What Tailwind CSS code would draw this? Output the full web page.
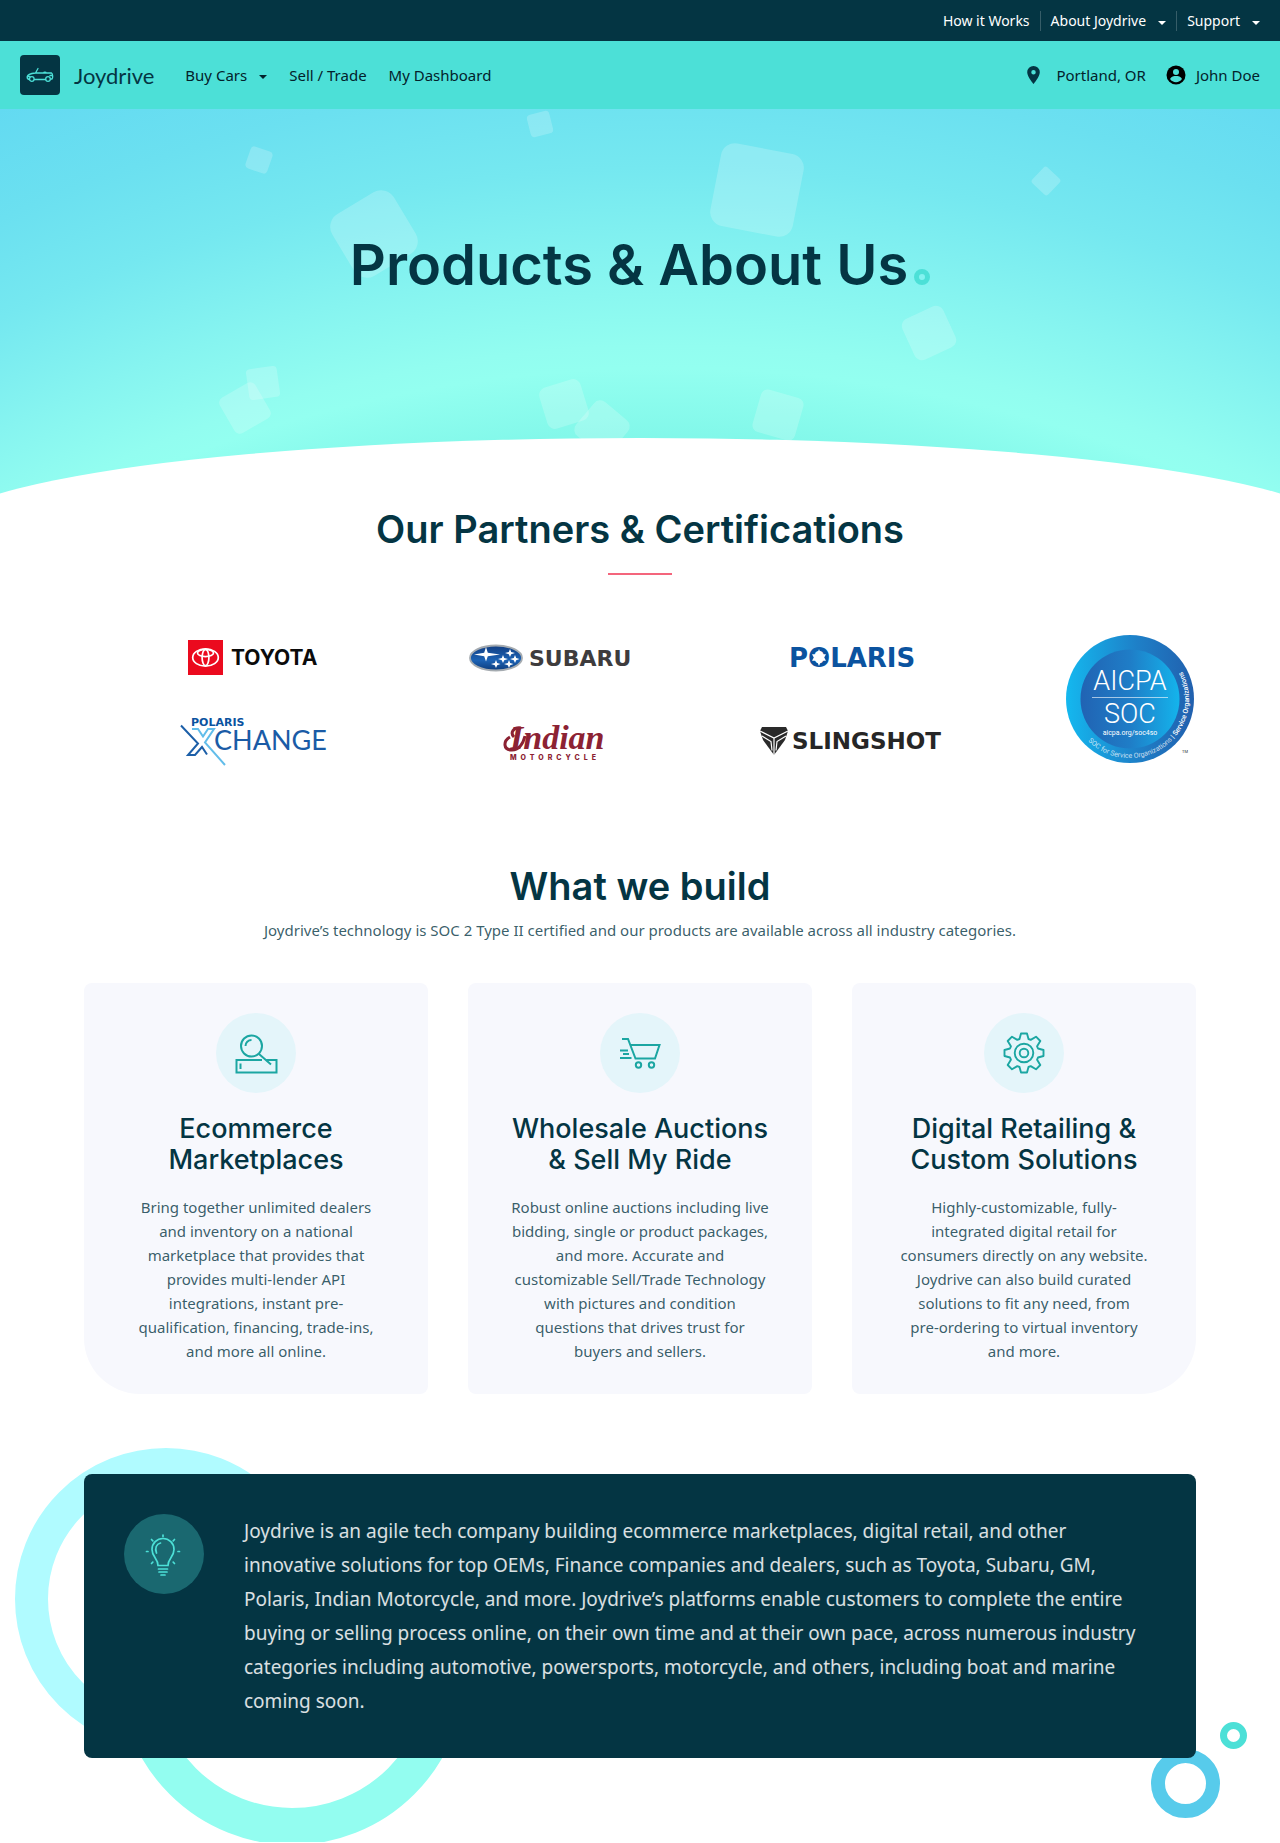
<!DOCTYPE html>
<html lang="en">
<head>
<meta charset="utf-8">
<meta name="viewport" content="width=device-width, initial-scale=1">
<title>Joydrive – Products &amp; About Us</title>
<script src="https://cdn.jsdelivr.net/npm/@tailwindcss/browser@4"></script>
</head>
<body class="bg-white font-['Noto_Sans',sans-serif] text-[#043543]">
<div class="overflow-hidden">

  <header>
    <nav aria-label="Secondary" class="flex h-[41px] items-center justify-end bg-[#043543] px-5 text-sm text-white">
      <a href="#" class="pr-[10px]">How it Works</a>
      <button type="button" class="flex items-center gap-3 border-l border-white/20 px-[10px]">About Joydrive
        <svg class="mt-1 h-1 w-2" viewBox="0 0 8 4" fill="currentColor"><path d="M0 0h8L4 4z"/></svg>
      </button>
      <button type="button" class="flex items-center gap-3 border-l border-white/20 pl-[10px]">Support
        <svg class="mt-1 h-1 w-2" viewBox="0 0 8 4" fill="currentColor"><path d="M0 0h8L4 4z"/></svg>
      </button>
    </nav>
    <nav aria-label="Main" class="flex h-[68px] items-center bg-[#4ce0d7] px-5 text-[15px] text-[#03222b]">
      <a href="#" class="mr-[31px] flex items-center gap-[14px] font-[Lato,sans-serif] text-[22px] text-[#043543]">
        <span class="flex size-10 items-center justify-center rounded bg-[#043543]">
          <svg class="h-4 w-7" viewBox="0 0 28 16" fill="none" stroke="#4ce0d7" stroke-width="1.3" stroke-linecap="round" stroke-linejoin="round">
            <circle cx="5.800" cy="12" r="2.300"/><circle cx="22" cy="12" r="2.300"/>
            <path d="M8.500 12.500h11M3.200 12.500C1 12 1 11 1.200 9.500 1.500 7 5 6.500 9.500 6l2.500-4.500M9.500 6h16c1.500 1 1.500 5 .500 6h-1.300M17.500 6c.300-1.300 2.500-1.300 2.800 0M1.500 9.500h2.500M24 8.500h2.500"/>
          </svg>
        </span>
        Joydrive
      </a>
      <div class="flex items-center gap-[22px]">
        <button type="button" class="flex items-center gap-3">Buy Cars
          <svg class="mt-1 h-1 w-2" viewBox="0 0 8 4" fill="currentColor"><path d="M0 0h8L4 4z"/></svg>
        </button>
        <a href="#">Sell / Trade</a>
        <a href="#">My Dashboard</a>
      </div>
      <div class="ml-auto flex items-center gap-5">
        <a href="#" class="flex items-center gap-4">
          <svg class="h-[18px] w-[13px]" viewBox="0 0 14 20" fill="#043543"><path fill-rule="evenodd" d="M7 0a7 7 0 0 0-7 7c0 5 7 13 7 13s7-8 7-13a7 7 0 0 0-7-7Zm0 4.500a2.500 2.500 0 1 1 0 5 2.500 2.500 0 0 1 0-5Z"/></svg>
          Portland, OR
        </a>
        <a href="#" class="flex items-center gap-[10px]">
          <svg class="size-5" viewBox="0 0 20 20"><circle cx="10" cy="10" r="9.500" fill="#000"/><circle cx="10" cy="7" r="3" fill="#4ce0d7"/><path d="M4 14c1-2.500 4-3 6-3s5 .500 6 3a7.200 7.200 0 0 1-12 0Z" fill="#4ce0d7"/></svg>
          John Doe
        </a>
      </div>
    </nav>
  </header>

  <section class="relative flex h-[386px] justify-center overflow-hidden bg-[radial-gradient(circle_1800px_at_52%_1609px,#7ef6e8_1265px,#93fff0_1350px,#92fdf0_1372px,#86f4f0_1450px,#75e8f0_1550px,#6be0f0_1640px,#5fd7f2_1790px)]">
    <svg class="absolute top-0 left-1/2 h-[386px] w-[1280px] -translate-x-1/2" viewBox="2 0 1280 386" fill="#fff" fill-opacity=".2" aria-hidden="true">
      <rect x="-11.500" y="-11.500" width="23" height="23" rx="4" transform="translate(261 51) rotate(19)"/>
      <rect x="-11.500" y="-11.500" width="23" height="23" rx="4" transform="translate(542 15) rotate(-14)"/>
      <rect x="-36" y="-36" width="72" height="72" rx="15" transform="translate(376 125) rotate(-31)"/>
      <rect x="-42" y="-42" width="84" height="84" rx="14" transform="translate(759 81) rotate(11)"/>
      <rect x="-11" y="-11" width="22" height="22" rx="3" transform="translate(1048 72) rotate(43)"/>
      <rect x="-22.500" y="-22.500" width="45" height="45" rx="8" transform="translate(931 224) rotate(-25)"/>
      <rect x="-22" y="-22" width="44" height="44" rx="7" transform="translate(780 306) rotate(16)"/>
      <rect x="-21.500" y="-21.500" width="43" height="43" rx="8" transform="translate(566 295) rotate(-17)"/>
      <rect x="-22" y="-22" width="44" height="44" rx="8" transform="translate(604 319) rotate(40)"/>
      <rect x="-15.500" y="-15.500" width="31" height="31" rx="4" transform="translate(265 274) rotate(-8)"/>
      <rect x="-20.500" y="-20.500" width="41" height="41" rx="6" transform="translate(247 299) rotate(-30)"/>
    </svg>
    <div class="absolute top-[329px] left-[-5%] h-[190px] w-[110%] rounded-[50%] bg-white"></div>
    <h1 class="relative mt-[124px] flex h-16 items-center gap-[6px] font-[Inter,sans-serif] text-[56px] leading-[64px] font-semibold">Products &amp; About Us
      <span class="mt-6 size-4 rounded-full border-[5px] border-[#4ce0d7]"></span>
    </h1>
  </section>

  <main class="mx-auto max-w-[1152px] px-5">
    <section class="pt-3">
      <h2 class="text-center font-[Inter,sans-serif] text-[38px] leading-[44px] font-semibold">Our Partners &amp; Certifications</h2>
      <div class="mx-auto mt-[22px] h-[2px] w-16 bg-[#f4657c]"></div>
      <div class="mt-[41px] flex items-center pl-5">
        <ul class="grid flex-1 auto-rows-[83px] grid-cols-3 place-items-center">
          <li>
            <svg width="132" height="36" viewBox="0 0 132 36" role="img" aria-label="Toyota">
              <rect width="35" height="35" fill="#eb0a1e"/>
              <g fill="none" stroke="#fff" stroke-width="1.700"><ellipse cx="17.500" cy="17.500" rx="12.800" ry="8.700"/><ellipse cx="17.500" cy="13" rx="8" ry="3.600"/><ellipse cx="17.500" cy="17.500" rx="3.400" ry="8.200"/></g>
              <text x="43" y="25" font-family="Inter, sans-serif" font-weight="700" font-size="21" fill="#0b0b0b">TOYOTA</text>
            </svg>
          </li>
          <li>
            <svg width="170" height="30" viewBox="0 0 170 30" role="img" aria-label="Subaru">
              <defs><linearGradient id="sub" x1="0" y1="0" x2="0" y2="1"><stop offset="0" stop-color="#123f83"/><stop offset=".6" stop-color="#1c62b4"/><stop offset="1" stop-color="#0d3c7c"/></linearGradient></defs>
              <ellipse cx="27" cy="15" rx="26" ry="12.500" fill="url(#sub)" stroke="#a5abb0" stroke-width="1.800"/>
              <g fill="#fff"><path d="M17 4l1.800 5.800L31 11.500l-12.200 1.700L17 18.500l-1.800-5.300L5 11.500l10.200-1.700z"/>
              <path d="M41 6l1.200 3 3.800 1-3.800 1.200L41 14l-1.200-2.800L36 10l3.800-1zM34 12l1.200 3 3.800 1-3.800 1.200L34 20l-1.200-2.800L29 16l3.800-1zM46 12l1.200 3 3.300 1-3.300 1.200L46 20l-1.200-2.800L41 16l3.800-1zM27 17l1.200 3 3.300 1-3.300 1.200L27 25l-1.200-2.800L22 21l3.800-1zM40 17l1.200 3 3.300 1-3.300 1.200L40 25l-1.200-2.800L35 21l3.800-1z"/></g>
              <text x="60" y="23" font-family="DejaVu Sans, sans-serif" font-weight="700" font-size="22" fill="#3e3c3d">SUBARU</text>
            </svg>
          </li>
          <li>
            <svg width="136" height="34" viewBox="0 -2 136 34" role="img" aria-label="Polaris">
              <text x="3" y="24" font-family="DejaVu Sans, sans-serif" font-weight="700" font-size="26" fill="#0b539f">POLARIS</text>
              <path d="M33 6l2.200 5.300h4.800l-1.800 3.200 1.800 3.200h-4.800L33 23l-2.200-5.300H26l1.800-3.200-1.800-3.200h4.800z" fill="#fff"/>
            </svg>
          </li>
          <li>
            <svg width="148" height="56" viewBox="0 -5 148 56" role="img" aria-label="Polaris Xchange">
              <text x="11" y="8" font-family="DejaVu Sans, sans-serif" font-weight="700" font-size="11" fill="#0b539f">POLARIS</text>
              <g fill="none" stroke-width="2"><path d="M1 7.500l17 18-10 11.500h7l7-8 5 7.500" stroke="#1c5fa8"/><path d="M12 11h6l5 7.500 5-7.500h6l-9 13.500 20 22.500" stroke="#62bdea"/></g>
              <text x="34" y="32" font-family="Lato, sans-serif" font-size="27" fill="#1a5ba6">CHANGE</text>
            </svg>
          </li>
          <li>
            <svg width="122" height="50" viewBox="-10 -8 122 50" role="img" aria-label="Indian Motorcycle" fill="#8c2233">
              <text x="7" y="25" font-family="Liberation Serif, serif" font-weight="700" font-style="italic" font-size="34">Indian</text>
              <path d="M18 4C10 3 7 9 11 13M7 13c-7 4-7 13 2 13 7 0 11-6 13-14" fill="none" stroke="#8c2233" stroke-width="3"/>
              <text x="7" y="36" font-family="Inter, sans-serif" font-weight="800" font-size="7" class="tracking-[4px]">MOTORCYCLE</text>
            </svg>
          </li>
          <li>
            <svg width="190" height="30" viewBox="0 0 190 30" role="img" aria-label="Slingshot">
              <path d="M3 1h24l2 4-3 9-11 15L4 14 1 5z" fill="#2a2a2a"/>
              <path d="M1 5l14 7 14-7M15 12v17M3 10l9 5.500 1 9M27 10l-9 5.500-1 9" fill="none" stroke="#fff" stroke-width="1.200"/>
              <text x="33" y="23" font-family="DejaVu Sans, sans-serif" font-weight="700" font-size="23" fill="#262626">SLINGSHOT</text>
            </svg>
          </li>
        </ul>
        <svg class="ml-[62px] size-[130px]" viewBox="0 0 130 130" role="img" aria-label="AICPA SOC for Service Organizations" fill="#fff">
          <defs>
            <linearGradient id="ring"><stop offset="0" stop-color="#14b8ef"/><stop offset=".55" stop-color="#1e80c8"/><stop offset="1" stop-color="#2160ae"/></linearGradient>
            <linearGradient id="disc"><stop offset="0" stop-color="#2163b3"/><stop offset=".5" stop-color="#1f7dc7"/><stop offset="1" stop-color="#14b4ec"/></linearGradient>
            <path id="arc" d="M22 107A59 59 0 0 0 64 124A59 59 0 0 0 123 65A59 59 0 0 0 64 6"/>
          </defs>
          <circle cx="64" cy="65" r="64" fill="url(#ring)"/>
          <circle cx="64" cy="65" r="49.500" fill="url(#disc)"/>
          <text x="64" y="56" text-anchor="middle" font-family="Roboto, sans-serif" font-weight="300" font-size="27">AICPA</text>
          <path d="M26 63h76v1H26z" fill-opacity=".6"/>
          <text x="64" y="89" text-anchor="middle" font-family="Roboto, sans-serif" font-weight="300" font-size="27">SOC</text>
          <text x="64" y="101" text-anchor="middle" font-family="Roboto, sans-serif" font-size="7">aicpa.org/soc4so</text>
          <text font-family="Roboto, sans-serif" font-size="7"><textPath href="#arc"><tspan fill-opacity=".75">SOC for Service Organizations</tspan> | <tspan font-weight="500">Service Organizations</tspan></textPath></text>
          <text x="116" y="119" font-family="Roboto, sans-serif" font-size="4" fill="#333">TM</text>
        </svg>
      </div>
    </section>

    <section class="pt-[82px] text-center">
      <h2 class="font-[Inter,sans-serif] text-[38px] leading-[44px] font-semibold">What we build</h2>
      <p class="mt-[10px] text-[15px] leading-6 text-[#043543]/80">Joydrive’s technology is SOC 2 Type II certified and our products are available across all industry categories.</p>
      <div class="mt-[41px] grid grid-cols-3 gap-10">
        <article class="flex flex-col items-center rounded-lg rounded-bl-[56px] bg-[#f7f8fd] px-8 pt-[30px] pb-[31px]">
          <svg class="size-20 rounded-full bg-[#e4f5fa]" viewBox="0 0 80 80" fill="none" stroke="#1ba6a2" stroke-width="2" aria-hidden="true">
            <circle cx="35.500" cy="33" r="10.500"/><path d="M29.500 33a6 6 0 0 1 6-6M43 41l12 10.500M24.500 50.500v5.500"/><path d="M46 47H20.500v12.500h40V47H50"/>
          </svg>
          <h3 class="mt-5 font-[Inter,sans-serif] text-[27px] leading-[31px] font-medium">Ecommerce<br>Marketplaces</h3>
          <p class="mt-5 text-[15px] leading-6 text-[#043543]/80">Bring together unlimited dealers<br>and inventory on a national<br>marketplace that provides that<br>provides multi-lender API<br>integrations, instant pre-<br>qualification, financing, trade-ins,<br>and more all online.</p>
        </article>
        <article class="flex flex-col items-center rounded-lg bg-[#f7f8fd] px-8 pt-[30px] pb-[31px]">
          <svg class="size-20 rounded-full bg-[#e4f5fa]" viewBox="0 0 80 80" fill="none" stroke="#1ba6a2" stroke-width="2" aria-hidden="true">
            <path d="M22 26h6l7.500 19.500H55L59.500 32h-29M20 37.500h8M23 41h6M20 45h11.500"/><circle cx="38.500" cy="52" r="2.700"/><circle cx="51.500" cy="52" r="2.700"/>
          </svg>
          <h3 class="mt-5 font-[Inter,sans-serif] text-[27px] leading-[31px] font-medium">Wholesale Auctions<br>&amp; Sell My Ride</h3>
          <p class="mt-5 text-[15px] leading-6 text-[#043543]/80">Robust online auctions including live<br>bidding, single or product packages,<br>and more. Accurate and<br>customizable Sell/Trade Technology<br>with pictures and condition<br>questions that drives trust for<br>buyers and sellers.</p>
        </article>
        <article class="flex flex-col items-center rounded-lg rounded-br-[56px] bg-[#f7f8fd] px-8 pt-[30px] pb-[31px]">
          <svg class="size-20 rounded-full bg-[#e4f5fa]" viewBox="0 0 80 80" fill="none" stroke="#1ba6a2" stroke-width="1.900" stroke-linejoin="round" aria-hidden="true">
            <g transform="translate(40 40)"><path d="M-4.500-14-3-19.500H3L4.500-14 6.700-13.100 12-16.300 16.300-12 13.100-6.700 14-4.500 19.500-3V3L14 4.500 13.100 6.700 16.300 12 12 16.300 6.700 13.100 4.500 14 3 19.500H-3L-4.500 14-6.700 13.100-12 16.300-16.300 12-13.100 6.700-14 4.500-19.500 3V-3L-14-4.500-13.100-6.700-16.300-12-12-16.300-6.700-13.100Z"/><circle r="9.300"/><circle r="4.300"/></g>
          </svg>
          <h3 class="mt-5 font-[Inter,sans-serif] text-[27px] leading-[31px] font-medium">Digital Retailing &amp;<br>Custom Solutions</h3>
          <p class="mt-5 text-[15px] leading-6 text-[#043543]/80">Highly-customizable, fully-<br>integrated digital retail for<br>consumers directly on any website.<br>Joydrive can also build curated<br>solutions to fit any need, from<br>pre-ordering to virtual inventory<br>and more.</p>
        </article>
      </div>
    </section>

    <section class="relative mt-20 mb-[84px]">
      <div class="absolute top-[-26px] left-[-69px] size-[302px] rounded-full border-[33px] border-[#b0fbff]"></div>
      <div class="absolute top-[25px] left-[35px] size-[346px] rounded-full border-[37px] border-[#93fdf0]"></div>
      <div class="absolute right-[-24px] bottom-[-60px] size-[69px] rounded-full border-[14px] border-[#57cbeb]"></div>
      <div class="absolute right-[-51px] bottom-[9px] size-[27px] rounded-full border-[7px] border-[#4ce0d7]"></div>
      <div class="relative flex gap-10 rounded-lg bg-[#043543] p-10">
        <svg class="size-20 shrink-0 rounded-full bg-[#1a6870]" viewBox="0 0 80 80" fill="none" stroke="#4ce0d7" stroke-width="1.700" stroke-linecap="round" aria-hidden="true">
          <path d="M34 51.500c0-7-6-8.500-6-16a11 11 0 0 1 22 0c0 7.500-6 9-6 16ZM34.500 55h9M35 58h8M37 61h4M32.500 39c-2-5 0-9 4-10M39 21v1.500M27.500 25.500l1.300 1.300M50.500 25.500l-1.300 1.300M22.500 37.500H24M54 37.500h1.500M27.500 49.500l1.300-1.300M50.500 49.500l-1.300-1.300"/>
        </svg>
        <p class="text-[19px] leading-[34px] text-white/85">Joydrive is an agile tech company building ecommerce marketplaces, digital retail, and other<br>innovative solutions for top OEMs, Finance companies and dealers, such as Toyota, Subaru, GM,<br>Polaris, Indian Motorcycle, and more. Joydrive’s platforms enable customers to complete the entire<br>buying or selling process online, on their own time and at their own pace, across numerous industry<br>categories including automotive, powersports, motorcycle, and others, including boat and marine<br>coming soon.</p>
      </div>
    </section>
  </main>
</div>
</body>
</html>
